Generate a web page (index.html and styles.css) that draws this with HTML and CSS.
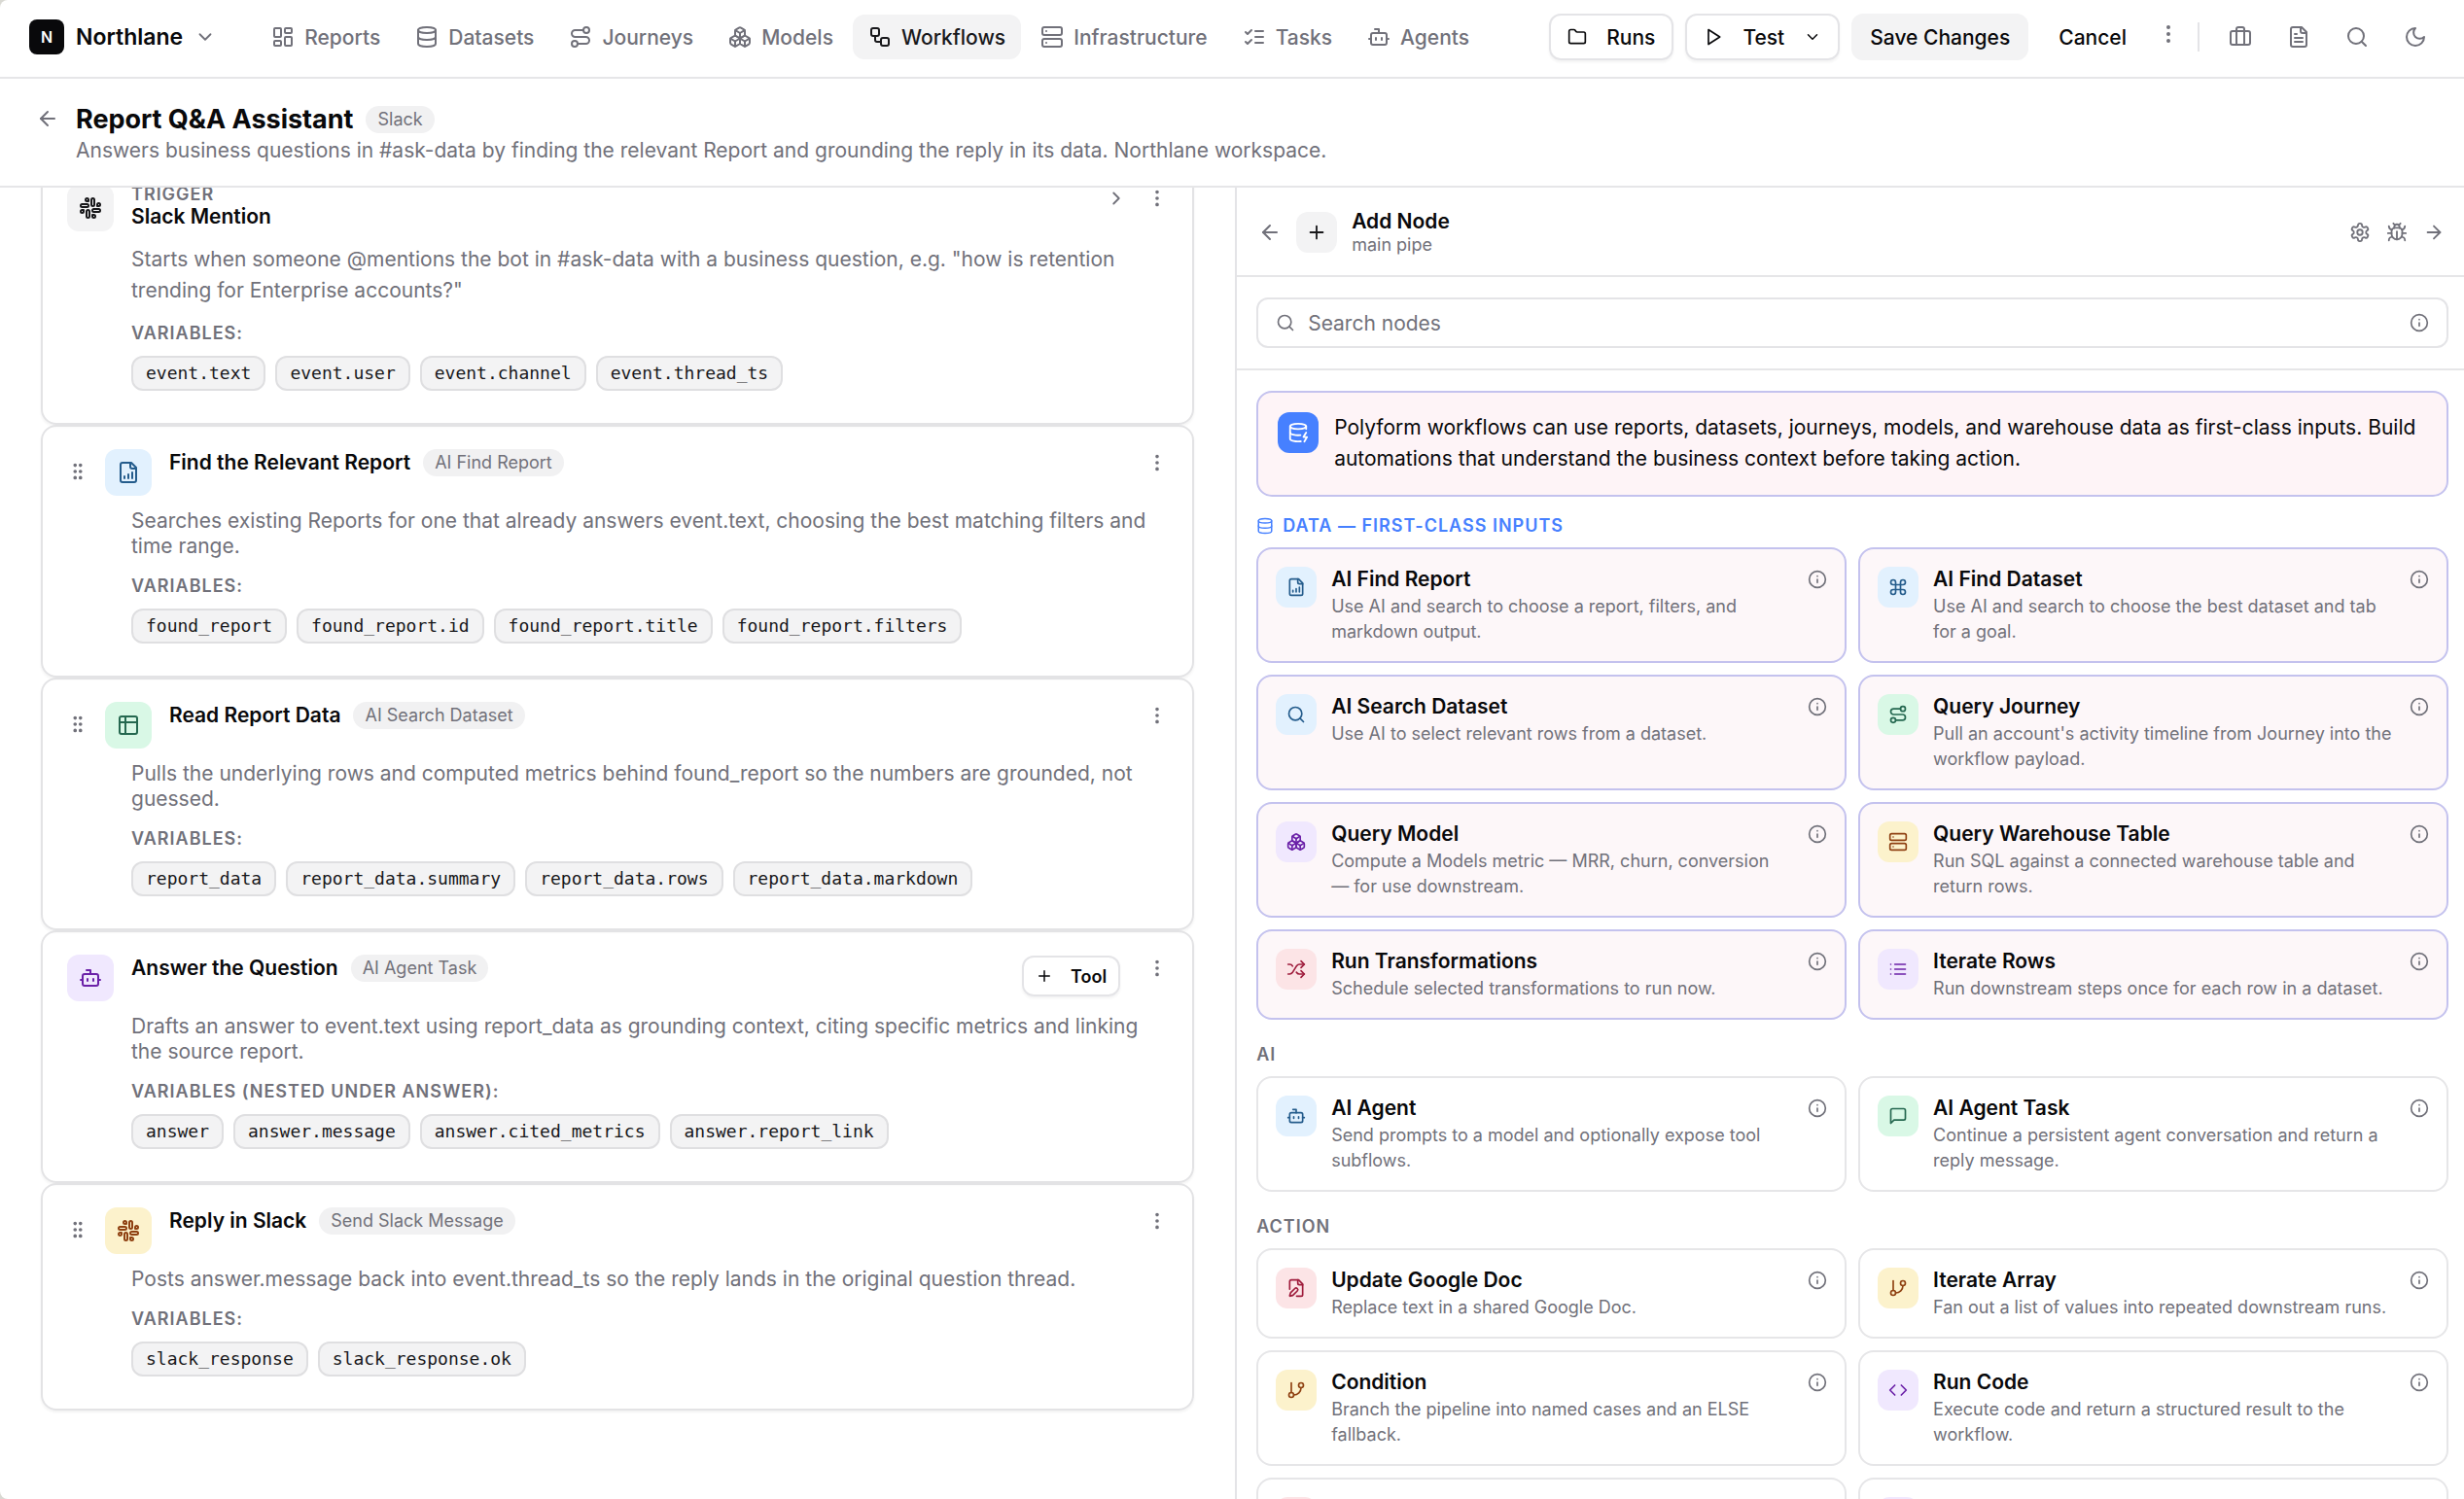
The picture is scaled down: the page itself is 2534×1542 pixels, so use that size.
FILE: index.html
```html
<!DOCTYPE html>
<html lang="en">
<head>
    <meta charset="UTF-8">
    <meta name="viewport" content="width=device-width, initial-scale=1.0">
    <title>Report Q&amp;A Assistant</title>
    <link rel="stylesheet" href="styles.css">
</head>
<body>
<svg class="sprite" aria-hidden="true">
    <symbol id="dashboard" viewBox="0 0 24 24"><rect width="7" height="9" x="3" y="3" rx="1"/><rect width="7" height="5" x="14" y="3" rx="1"/><rect width="7" height="9" x="14" y="12" rx="1"/><rect width="7" height="5" x="3" y="16" rx="1"/></symbol>
    <symbol id="database" viewBox="0 0 24 24"><ellipse cx="12" cy="5" rx="9" ry="3"/><path d="M3 5V19A9 3 0 0 0 21 19V5"/><path d="M3 12A9 3 0 0 0 21 12"/></symbol>
    <symbol id="database-zap" viewBox="0 0 24 24"><ellipse cx="12" cy="5" rx="9" ry="3"/><path d="M3 5V19A9 3 0 0 0 15 21.84"/><path d="M21 5V8"/><path d="M21 12L18 17H22L19 22"/><path d="M3 12A9 3 0 0 0 14.59 14.87"/></symbol>
    <symbol id="route" viewBox="0 0 24 24"><circle cx="6" cy="19" r="3"/><path d="M9 19h8.5a3.5 3.5 0 0 0 0-7h-11a3.5 3.5 0 0 1 0-7H15"/><circle cx="18" cy="5" r="3"/></symbol>
    <symbol id="boxes" viewBox="0 0 24 24"><path d="M2.97 12.92A2 2 0 0 0 2 14.63v3.24a2 2 0 0 0 .97 1.71l3 1.8a2 2 0 0 0 2.06 0L12 19v-5.5l-5-3-4.03 2.42Z"/><path d="m7 16.5-4.74-2.85"/><path d="m7 16.5 5-3"/><path d="M7 16.5v5.17"/><path d="M12 13.5V19l3.97 2.38a2 2 0 0 0 2.06 0l3-1.8a2 2 0 0 0 .97-1.71v-3.24a2 2 0 0 0-.97-1.71L17 10.5l-5 3Z"/><path d="m17 16.5-5-3"/><path d="m17 16.5 4.74-2.85"/><path d="M17 16.5v5.17"/><path d="M7.97 4.42A2 2 0 0 0 7 6.13v4.37l5 3 5-3V6.13a2 2 0 0 0-.97-1.71l-3-1.8a2 2 0 0 0-2.06 0l-3 1.8Z"/><path d="M12 8 7.26 5.15"/><path d="m12 8 4.74-2.85"/><path d="M12 13.5V8"/></symbol>
    <symbol id="workflow" viewBox="0 0 24 24"><rect width="8" height="8" x="3" y="3" rx="2"/><path d="M7 11v4a2 2 0 0 0 2 2h4"/><rect width="8" height="8" x="13" y="13" rx="2"/></symbol>
    <symbol id="server" viewBox="0 0 24 24"><rect width="20" height="8" x="2" y="2" rx="2"/><rect width="20" height="8" x="2" y="14" rx="2"/><path d="M6 6h.01M6 18h.01"/></symbol>
    <symbol id="checks" viewBox="0 0 24 24"><path d="m3 17 2 2 4-4"/><path d="m3 7 2 2 4-4"/><path d="M13 6h8M13 12h8M13 18h8"/></symbol>
    <symbol id="bot" viewBox="0 0 24 24"><path d="M12 8V4H8"/><rect width="16" height="12" x="4" y="8" rx="2"/><path d="M2 14h2M20 14h2M15 13v2M9 13v2"/></symbol>
    <symbol id="folder" viewBox="0 0 24 24"><path d="M20 20a2 2 0 0 0 2-2V8a2 2 0 0 0-2-2h-7.9a2 2 0 0 1-1.69-.9L9.6 3.9A2 2 0 0 0 7.93 3H4a2 2 0 0 0-2 2v13a2 2 0 0 0 2 2Z"/></symbol>
    <symbol id="play" viewBox="0 0 24 24"><path d="M6 3l14 9-14 9z"/></symbol>
    <symbol id="chevron-down" viewBox="0 0 24 24"><path d="m6 9 6 6 6-6"/></symbol>
    <symbol id="chevron-right" viewBox="0 0 24 24"><path d="m9 18 6-6-6-6"/></symbol>
    <symbol id="arrow-left" viewBox="0 0 24 24"><path d="m12 19-7-7 7-7"/><path d="M19 12H5"/></symbol>
    <symbol id="arrow-right" viewBox="0 0 24 24"><path d="M5 12h14"/><path d="m12 5 7 7-7 7"/></symbol>
    <symbol id="dots" viewBox="0 0 24 24"><circle cx="12" cy="12" r="1"/><circle cx="12" cy="5" r="1"/><circle cx="12" cy="19" r="1"/></symbol>
    <symbol id="grip" viewBox="0 0 24 24"><circle cx="9" cy="12" r="1"/><circle cx="9" cy="5" r="1"/><circle cx="9" cy="19" r="1"/><circle cx="15" cy="12" r="1"/><circle cx="15" cy="5" r="1"/><circle cx="15" cy="19" r="1"/></symbol>
    <symbol id="briefcase" viewBox="0 0 24 24"><path d="M16 20V4a2 2 0 0 0-2-2h-4a2 2 0 0 0-2 2v16"/><rect width="20" height="14" x="2" y="6" rx="2"/></symbol>
    <symbol id="file-text" viewBox="0 0 24 24"><path d="M15 2H6a2 2 0 0 0-2 2v16a2 2 0 0 0 2 2h12a2 2 0 0 0 2-2V7Z"/><path d="M14 2v4a2 2 0 0 0 2 2h4"/><path d="M10 9H8M16 13H8M16 17H8"/></symbol>
    <symbol id="file-chart" viewBox="0 0 24 24"><path d="M15 2H6a2 2 0 0 0-2 2v16a2 2 0 0 0 2 2h12a2 2 0 0 0 2-2V7Z"/><path d="M14 2v4a2 2 0 0 0 2 2h4"/><path d="M8 18v-2M12 18v-4M16 18v-6"/></symbol>
    <symbol id="file-pen" viewBox="0 0 24 24"><path d="M12.5 22H18a2 2 0 0 0 2-2V7l-5-5H6a2 2 0 0 0-2 2v9.5"/><path d="M14 2v4a2 2 0 0 0 2 2h4"/><path d="M13.378 15.626a1 1 0 1 0-3.004-3.004l-5.01 5.012a2 2 0 0 0-.506.854l-.837 2.87a.5.5 0 0 0 .62.62l2.87-.837a2 2 0 0 0 .854-.506z"/></symbol>
    <symbol id="search" viewBox="0 0 24 24"><circle cx="11" cy="11" r="8"/><path d="m21 21-4.3-4.3"/></symbol>
    <symbol id="moon" viewBox="0 0 24 24"><path d="M12 3a6 6 0 0 0 9 9 9 9 0 1 1-9-9Z"/></symbol>
    <symbol id="slack" viewBox="0 0 24 24"><rect width="3" height="8" x="13" y="2" rx="1.5"/><path d="M19 8.5V10h1.5A1.5 1.5 0 1 0 19 8.5"/><rect width="3" height="8" x="8" y="14" rx="1.5"/><path d="M5 15.5V14H3.5A1.5 1.5 0 1 0 5 15.5"/><rect width="8" height="3" x="14" y="13" rx="1.5"/><path d="M15.5 19H14v1.5a1.5 1.5 0 1 0 1.5-1.5"/><rect width="8" height="3" x="2" y="8" rx="1.5"/><path d="M8.5 5H10V3.5A1.5 1.5 0 1 0 8.5 5"/></symbol>
    <symbol id="table" viewBox="0 0 24 24"><rect width="18" height="18" x="3" y="3" rx="2"/><path d="M3 9h18M9 3v18"/></symbol>
    <symbol id="plus" viewBox="0 0 24 24"><path d="M5 12h14M12 5v14"/></symbol>
    <symbol id="info" viewBox="0 0 24 24"><circle cx="12" cy="12" r="10"/><path d="M12 16v-4M12 8h.01"/></symbol>
    <symbol id="settings" viewBox="0 0 24 24"><path d="M12.22 2h-.44a2 2 0 0 0-2 2v.18a2 2 0 0 1-1 1.73l-.43.25a2 2 0 0 1-2 0l-.15-.08a2 2 0 0 0-2.73.73l-.22.38a2 2 0 0 0 .73 2.73l.15.1a2 2 0 0 1 1 1.72v.51a2 2 0 0 1-1 1.74l-.15.09a2 2 0 0 0-.73 2.73l.22.38a2 2 0 0 0 2.73.73l.15-.08a2 2 0 0 1 2 0l.43.25a2 2 0 0 1 1 1.73V20a2 2 0 0 0 2 2h.44a2 2 0 0 0 2-2v-.18a2 2 0 0 1 1-1.73l.43-.25a2 2 0 0 1 2 0l.15.08a2 2 0 0 0 2.73-.73l.22-.39a2 2 0 0 0-.73-2.73l-.15-.08a2 2 0 0 1-1-1.74v-.5a2 2 0 0 1 1-1.74l.15-.09a2 2 0 0 0 .73-2.73l-.22-.38a2 2 0 0 0-2.73-.73l-.15.08a2 2 0 0 1-2 0l-.43-.25a2 2 0 0 1-1-1.73V4a2 2 0 0 0-2-2z"/><circle cx="12" cy="12" r="3"/></symbol>
    <symbol id="bug" viewBox="0 0 24 24"><path d="m8 2 1.88 1.88M14.12 3.88 16 2"/><path d="M9 7.13v-1a3.003 3.003 0 1 1 6 0v1"/><path d="M12 20c-3.3 0-6-2.7-6-6v-3a4 4 0 0 1 4-4h4a4 4 0 0 1 4 4v3c0 3.3-2.7 6-6 6"/><path d="M12 20v-9"/><path d="M6.53 9C4.6 8.8 3 7.1 3 5"/><path d="M6 13H2"/><path d="M3 21c0-2.1 1.7-3.9 3.8-4"/><path d="M20.97 5c0 2.1-1.6 3.8-3.5 4"/><path d="M22 13h-4"/><path d="M17.2 17c2.1.1 3.8 1.9 3.8 4"/></symbol>
    <symbol id="command" viewBox="0 0 24 24"><path d="M15 6v12a3 3 0 1 0 3-3H6a3 3 0 1 0 3 3V6a3 3 0 1 0-3 3h12a3 3 0 1 0-3-3"/></symbol>
    <symbol id="shuffle" viewBox="0 0 24 24"><path d="m18 14 4 4-4 4"/><path d="m18 2 4 4-4 4"/><path d="M2 18h1.973a4 4 0 0 0 3.3-1.7l5.454-8.6a4 4 0 0 1 3.3-1.7H22"/><path d="M2 6h1.972a4 4 0 0 1 3.6 2.2"/><path d="M22 18h-6.041a4 4 0 0 1-3.3-1.8l-.359-.45"/></symbol>
    <symbol id="list" viewBox="0 0 24 24"><path d="M3 6h.01M3 12h.01M3 18h.01M8 6h13M8 12h13M8 18h13"/></symbol>
    <symbol id="message" viewBox="0 0 24 24"><path d="M21 15a2 2 0 0 1-2 2H7l-4 4V5a2 2 0 0 1 2-2h14a2 2 0 0 1 2 2z"/></symbol>
    <symbol id="branch" viewBox="0 0 24 24"><path d="M6 3v12"/><circle cx="18" cy="6" r="3"/><circle cx="6" cy="18" r="3"/><path d="M18 9a9 9 0 0 1-9 9"/></symbol>
    <symbol id="code" viewBox="0 0 24 24"><path d="m16 18 6-6-6-6"/><path d="m8 6-6 6 6 6"/></symbol>
</svg>

<div class="app">
    <header class="topbar">
        <button class="workspace">
            <span class="logo">N</span>
            <span>Northlane</span>
            <svg class="icon s22"><use href="#chevron-down"/></svg>
        </button>
        <nav class="nav">
            <a href="#"><svg class="icon"><use href="#dashboard"/></svg>Reports</a>
            <a href="#"><svg class="icon"><use href="#database"/></svg>Datasets</a>
            <a href="#"><svg class="icon"><use href="#route"/></svg>Journeys</a>
            <a href="#"><svg class="icon"><use href="#boxes"/></svg>Models</a>
            <a href="#" class="active"><svg class="icon"><use href="#workflow"/></svg>Workflows</a>
            <a href="#"><svg class="icon"><use href="#server"/></svg>Infrastructure</a>
            <a href="#"><svg class="icon"><use href="#checks"/></svg>Tasks</a>
            <a href="#"><svg class="icon"><use href="#bot"/></svg>Agents</a>
        </nav>
        <div class="actions">
            <button class="btn outline"><svg class="icon s20"><use href="#folder"/></svg>Runs</button>
            <button class="btn outline"><svg class="icon s20"><use href="#play"/></svg>Test<svg class="icon s18"><use href="#chevron-down"/></svg></button>
            <button class="btn filled">Save Changes</button>
            <button class="btn">Cancel</button>
            <button class="icon-btn more" aria-label="More"><svg class="icon"><use href="#dots"/></svg></button>
        </div>
        <div class="tools">
            <button class="icon-btn" aria-label="Workspace"><svg class="icon"><use href="#briefcase"/></svg></button>
            <button class="icon-btn" aria-label="Docs"><svg class="icon"><use href="#file-text"/></svg></button>
            <button class="icon-btn" aria-label="Search"><svg class="icon"><use href="#search"/></svg></button>
            <button class="icon-btn" aria-label="Theme"><svg class="icon"><use href="#moon"/></svg></button>
        </div>
    </header>

    <div class="page-head">
        <button class="icon-btn back" aria-label="Back"><svg class="icon"><use href="#arrow-left"/></svg></button>
        <div>
            <div class="page-title">
                <h1>Report Q&amp;A Assistant</h1>
                <span class="badge">Slack</span>
            </div>
            <p class="page-desc">Answers business questions in #ask-data by finding the relevant Report and grounding the reply in its data. Northlane workspace.</p>
        </div>
    </div>

    <main class="workspace-body">
        <section class="pipeline">
            <div class="steps">
                <article class="step">
                    <div class="step-head">
                        <span class="tile gray"><svg class="icon"><use href="#slack"/></svg></span>
                        <div class="step-name">
                            <div class="label">TRIGGER</div>
                            <h2>Slack Mention</h2>
                        </div>
                        <div class="step-actions">
                            <button class="icon-btn" aria-label="Open"><svg class="icon s22"><use href="#chevron-right"/></svg></button>
                            <button class="icon-btn" aria-label="More"><svg class="icon s22"><use href="#dots"/></svg></button>
                        </div>
                    </div>
                    <div class="step-body">
                        <p class="loose">Starts when someone @mentions the bot in #ask-data with a business question, e.g. "how is retention trending for Enterprise accounts?"</p>
                        <div class="label">VARIABLES:</div>
                        <div class="chips"><code>event.text</code><code>event.user</code><code>event.channel</code><code>event.thread_ts</code></div>
                    </div>
                </article>

                <article class="step">
                    <div class="step-head">
                        <button class="grip" aria-label="Move"><svg class="icon s22"><use href="#grip"/></svg></button>
                        <span class="tile blue"><svg class="icon"><use href="#file-chart"/></svg></span>
                        <div class="step-title"><h2>Find the Relevant Report</h2><span class="badge">AI Find Report</span></div>
                        <div class="step-actions">
                            <button class="icon-btn" aria-label="More"><svg class="icon s22"><use href="#dots"/></svg></button>
                        </div>
                    </div>
                    <div class="step-body">
                        <p>Searches existing Reports for one that already answers event.text, choosing the best matching filters and time range.</p>
                        <div class="label">VARIABLES:</div>
                        <div class="chips"><code>found_report</code><code>found_report.id</code><code>found_report.title</code><code>found_report.filters</code></div>
                    </div>
                </article>

                <article class="step">
                    <div class="step-head">
                        <button class="grip" aria-label="Move"><svg class="icon s22"><use href="#grip"/></svg></button>
                        <span class="tile green"><svg class="icon"><use href="#table"/></svg></span>
                        <div class="step-title"><h2>Read Report Data</h2><span class="badge">AI Search Dataset</span></div>
                        <div class="step-actions">
                            <button class="icon-btn" aria-label="More"><svg class="icon s22"><use href="#dots"/></svg></button>
                        </div>
                    </div>
                    <div class="step-body">
                        <p>Pulls the underlying rows and computed metrics behind found_report so the numbers are grounded, not guessed.</p>
                        <div class="label">VARIABLES:</div>
                        <div class="chips"><code>report_data</code><code>report_data.summary</code><code>report_data.rows</code><code>report_data.markdown</code></div>
                    </div>
                </article>

                <article class="step">
                    <div class="step-head">
                        <span class="tile purple"><svg class="icon"><use href="#bot"/></svg></span>
                        <div class="step-title"><h2>Answer the Question</h2><span class="badge">AI Agent Task</span></div>
                        <div class="step-actions">
                            <button class="tool-btn"><svg class="icon s18"><use href="#plus"/></svg>Tool</button>
                            <button class="icon-btn" aria-label="More"><svg class="icon s22"><use href="#dots"/></svg></button>
                        </div>
                    </div>
                    <div class="step-body">
                        <p>Drafts an answer to event.text using report_data as grounding context, citing specific metrics and linking the source report.</p>
                        <div class="label">VARIABLES (NESTED UNDER ANSWER):</div>
                        <div class="chips"><code>answer</code><code>answer.message</code><code>answer.cited_metrics</code><code>answer.report_link</code></div>
                    </div>
                </article>

                <article class="step">
                    <div class="step-head">
                        <button class="grip" aria-label="Move"><svg class="icon s22"><use href="#grip"/></svg></button>
                        <span class="tile yellow"><svg class="icon"><use href="#slack"/></svg></span>
                        <div class="step-title"><h2>Reply in Slack</h2><span class="badge">Send Slack Message</span></div>
                        <div class="step-actions">
                            <button class="icon-btn" aria-label="More"><svg class="icon s22"><use href="#dots"/></svg></button>
                        </div>
                    </div>
                    <div class="step-body">
                        <p>Posts answer.message back into event.thread_ts so the reply lands in the original question thread.</p>
                        <div class="label">VARIABLES:</div>
                        <div class="chips"><code>slack_response</code><code>slack_response.ok</code></div>
                    </div>
                </article>
            </div>
        </section>

        <aside class="panel">
            <div class="panel-head">
                <button class="icon-btn" aria-label="Back"><svg class="icon"><use href="#arrow-left"/></svg></button>
                <span class="tile small gray"><svg class="icon s22"><use href="#plus"/></svg></span>
                <div class="panel-title">
                    <h2>Add Node</h2>
                    <p>main pipe</p>
                </div>
                <div class="panel-tools">
                    <button class="icon-btn" aria-label="Settings"><svg class="icon s22"><use href="#settings"/></svg></button>
                    <button class="icon-btn" aria-label="Debug"><svg class="icon s22"><use href="#bug"/></svg></button>
                    <button class="icon-btn" aria-label="Next"><svg class="icon s22"><use href="#arrow-right"/></svg></button>
                </div>
            </div>

            <div class="search-row">
                <div class="search-box">
                    <svg class="icon s20"><use href="#search"/></svg>
                    <input type="text" placeholder="Search nodes" aria-label="Search nodes">
                    <button class="icon-btn" aria-label="Info"><svg class="icon s20"><use href="#info"/></svg></button>
                </div>
            </div>

            <div class="catalog">
                <div class="callout">
                    <span class="tile small solid"><svg class="icon s22"><use href="#database-zap"/></svg></span>
                    <p>Polyform workflows can use reports, datasets, journeys, models, and warehouse data as first-class inputs. Build automations that understand the business context before taking action.</p>
                </div>

                <h3 class="label data"><svg class="icon s18"><use href="#database"/></svg>DATA — FIRST-CLASS INPUTS</h3>
                <div class="grid first-class">
                    <article class="node">
                        <span class="tile small blue"><svg class="icon s20"><use href="#file-chart"/></svg></span>
                        <div class="node-text"><h4>AI Find Report</h4><p>Use AI and search to choose a report, filters, and markdown output.</p></div>
                        <button class="icon-btn" aria-label="Info"><svg class="icon s20"><use href="#info"/></svg></button>
                    </article>
                    <article class="node">
                        <span class="tile small blue"><svg class="icon s20"><use href="#command"/></svg></span>
                        <div class="node-text"><h4>AI Find Dataset</h4><p>Use AI and search to choose the best dataset and tab for a goal.</p></div>
                        <button class="icon-btn" aria-label="Info"><svg class="icon s20"><use href="#info"/></svg></button>
                    </article>
                    <article class="node">
                        <span class="tile small blue"><svg class="icon s20"><use href="#search"/></svg></span>
                        <div class="node-text"><h4>AI Search Dataset</h4><p>Use AI to select relevant rows from a dataset.</p></div>
                        <button class="icon-btn" aria-label="Info"><svg class="icon s20"><use href="#info"/></svg></button>
                    </article>
                    <article class="node">
                        <span class="tile small green"><svg class="icon s20"><use href="#route"/></svg></span>
                        <div class="node-text"><h4>Query Journey</h4><p>Pull an account's activity timeline from Journey into the workflow payload.</p></div>
                        <button class="icon-btn" aria-label="Info"><svg class="icon s20"><use href="#info"/></svg></button>
                    </article>
                    <article class="node">
                        <span class="tile small purple"><svg class="icon s20"><use href="#boxes"/></svg></span>
                        <div class="node-text"><h4>Query Model</h4><p>Compute a Models metric — MRR, churn, conversion —&nbsp;for use downstream.</p></div>
                        <button class="icon-btn" aria-label="Info"><svg class="icon s20"><use href="#info"/></svg></button>
                    </article>
                    <article class="node">
                        <span class="tile small yellow"><svg class="icon s20"><use href="#server"/></svg></span>
                        <div class="node-text"><h4>Query Warehouse Table</h4><p>Run SQL against a connected warehouse table and return rows.</p></div>
                        <button class="icon-btn" aria-label="Info"><svg class="icon s20"><use href="#info"/></svg></button>
                    </article>
                    <article class="node">
                        <span class="tile small pink"><svg class="icon s20"><use href="#shuffle"/></svg></span>
                        <div class="node-text"><h4>Run Transformations</h4><p>Schedule selected transformations to run now.</p></div>
                        <button class="icon-btn" aria-label="Info"><svg class="icon s20"><use href="#info"/></svg></button>
                    </article>
                    <article class="node">
                        <span class="tile small purple"><svg class="icon s20"><use href="#list"/></svg></span>
                        <div class="node-text"><h4>Iterate Rows</h4><p>Run downstream steps once for each row in a dataset.</p></div>
                        <button class="icon-btn" aria-label="Info"><svg class="icon s20"><use href="#info"/></svg></button>
                    </article>
                </div>

                <h3 class="label">AI</h3>
                <div class="grid">
                    <article class="node">
                        <span class="tile small blue"><svg class="icon s20"><use href="#bot"/></svg></span>
                        <div class="node-text"><h4>AI Agent</h4><p>Send prompts to a model and optionally expose tool subflows.</p></div>
                        <button class="icon-btn" aria-label="Info"><svg class="icon s20"><use href="#info"/></svg></button>
                    </article>
                    <article class="node">
                        <span class="tile small green"><svg class="icon s20"><use href="#message"/></svg></span>
                        <div class="node-text"><h4>AI Agent Task</h4><p>Continue a persistent agent conversation and return a reply message.</p></div>
                        <button class="icon-btn" aria-label="Info"><svg class="icon s20"><use href="#info"/></svg></button>
                    </article>
                </div>

                <h3 class="label">ACTION</h3>
                <div class="grid">
                    <article class="node">
                        <span class="tile small pink"><svg class="icon s20"><use href="#file-pen"/></svg></span>
                        <div class="node-text"><h4>Update Google Doc</h4><p>Replace text in a shared Google Doc.</p></div>
                        <button class="icon-btn" aria-label="Info"><svg class="icon s20"><use href="#info"/></svg></button>
                    </article>
                    <article class="node">
                        <span class="tile small yellow"><svg class="icon s20"><use href="#branch"/></svg></span>
                        <div class="node-text"><h4>Iterate Array</h4><p>Fan out a list of values into repeated downstream runs.</p></div>
                        <button class="icon-btn" aria-label="Info"><svg class="icon s20"><use href="#info"/></svg></button>
                    </article>
                    <article class="node">
                        <span class="tile small yellow"><svg class="icon s20"><use href="#branch"/></svg></span>
                        <div class="node-text"><h4>Condition</h4><p>Branch the pipeline into named cases and an ELSE fallback.</p></div>
                        <button class="icon-btn" aria-label="Info"><svg class="icon s20"><use href="#info"/></svg></button>
                    </article>
                    <article class="node">
                        <span class="tile small purple"><svg class="icon s20"><use href="#code"/></svg></span>
                        <div class="node-text"><h4>Run Code</h4><p>Execute code and return a structured result to the workflow.</p></div>
                        <button class="icon-btn" aria-label="Info"><svg class="icon s20"><use href="#info"/></svg></button>
                    </article>
                    <article class="node"><span class="tile small pink"></span></article>
                    <article class="node"><span class="tile small purple"></span></article>
                </div>
            </div>
        </aside>
    </main>
</div>
</body>
</html>
```

FILE: styles.css
```css
* {
    box-sizing: border-box;
}
body {
    margin: 0;
    background-color: #d9d9d3;
    font-family: Inter, "Liberation Sans", sans-serif;
    font-size: 21px;
    color: #09090b;
}
h1, h2, h3, h4, p {
    margin: 0;
}
button {
    margin: 0;
    padding: 0;
    border: none;
    background: none;
    font: inherit;
    color: inherit;
    cursor: pointer;
}
.sprite {
    display: none;
}
.icon {
    flex: none;
    display: block;
    width: 24px;
    height: 24px;
    fill: none;
    stroke: currentColor;
    stroke-width: 2;
    stroke-linecap: round;
    stroke-linejoin: round;
}
.s22 { width: 22px; height: 22px; }
.s20 { width: 20px; height: 20px; }
.s18 { width: 18px; height: 18px; }
.icon-btn {
    flex: none;
    color: #71717a;
}
.app {
    display: flex;
    flex-direction: column;
    height: 100vh;
    overflow: hidden;
    border-radius: 8px 0 0 8px;
    background-color: #fff;
}

/* top bar */
.topbar {
    flex: none;
    display: flex;
    align-items: center;
    padding: 14px 38px 17px 30px;
    border-bottom: 2px solid #e6e6e8;
}
.workspace {
    display: flex;
    align-items: center;
    gap: 12px;
    font-size: 23px;
    font-weight: 600;
}
.workspace .icon {
    color: #71717a;
}
.logo {
    width: 36px;
    height: 36px;
    border-radius: 8px;
    background-color: #09090b;
    color: #fff;
    font-size: 16px;
    line-height: 36px;
    text-align: center;
}
.nav {
    display: flex;
    gap: 4px;
    margin-left: 41px;
}
.nav a {
    display: flex;
    align-items: center;
    gap: 10px;
    height: 46px;
    padding: 0 16px;
    border-radius: 12px;
    color: #71717a;
    font-weight: 500;
    text-decoration: none;
}
.nav .active {
    background-color: #f3f3f4;
    color: #18181b;
}
.actions {
    display: flex;
    align-items: center;
    gap: 12px;
    margin-left: auto;
}
.btn {
    display: flex;
    align-items: center;
    gap: 20px;
    height: 48px;
    padding: 0 19px;
    border-radius: 12px;
    font-weight: 500;
}
.outline {
    padding: 0 17px;
    border: 2px solid #e4e4e7;
    box-shadow: 0 2px 3px rgba(0, 0, 0, 0.05);
}
.filled {
    background-color: #f3f3f4;
}
.more {
    padding-bottom: 6px;
}
.tools {
    display: flex;
    gap: 36px;
    margin-left: 18px;
    padding: 3px 0 3px 30px;
    border-left: 2px solid #e4e4e7;
}

/* workflow name */
.page-head {
    flex: none;
    display: flex;
    align-items: flex-start;
    gap: 17px;
    padding: 27px 37px 22px;
    border-bottom: 2px solid #e6e6e8;
}
.back {
    padding-top: 2px;
}
.page-title {
    display: flex;
    align-items: center;
    gap: 13px;
}
h1 {
    font-size: 27px;
    line-height: 30px;
    font-weight: 700;
}
.page-desc {
    margin-top: 3px;
    line-height: 28px;
    color: #71717a;
}
.badge {
    padding: 0 12px;
    border-radius: 14px;
    background-color: #f1f1f2;
    color: #71717a;
    font-size: 18px;
    line-height: 28px;
}
.workspace-body {
    flex: 1;
    min-height: 0;
    display: grid;
    grid-template-columns: 201fr 200fr;
}

/* pipeline */
.pipeline {
    overflow: hidden;
    padding: 0 42px;
}
.steps {
    margin-top: -28px;
}
.step {
    padding: 23px 25px 33px;
    border: 2px solid #e3e3e5;
    border-radius: 16px;
    box-shadow: 0 2px 3px rgba(0, 0, 0, 0.05);
}
.step-head {
    display: flex;
    align-items: flex-start;
    height: 48px;
    margin-bottom: 13px;
}
.grip {
    margin: 12px 17px 0 0;
    color: #71717a;
}
.tile {
    flex: none;
    display: flex;
    align-items: center;
    justify-content: center;
    width: 48px;
    height: 48px;
    border-radius: 12px;
}
.small {
    width: 42px;
    height: 42px;
}
.gray { background-color: #f3f3f4; color: #18181b; }
.blue { background-color: #e2f1fe; color: #245c8c; }
.green { background-color: #d9f8e6; color: #256850; }
.purple { background-color: #f0e8fe; color: #6b21a8; }
.yellow { background-color: #fcf2cc; color: #8f4112; }
.pink { background-color: #fce4e6; color: #9f1c3c; }
.solid { background-color: #4680ff; color: #fff; }
h2, h4 {
    font-size: 21px;
    line-height: 26px;
    font-weight: 600;
}
.step-name, .step-title {
    margin-left: 18px;
}
.step-title {
    display: flex;
    align-items: center;
    gap: 13px;
}
.step-actions {
    display: flex;
    align-items: flex-start;
    gap: 20px;
    margin-left: auto;
}
.step-actions .icon-btn {
    padding-top: 3px;
}
.tool-btn {
    display: flex;
    align-items: center;
    gap: 18px;
    height: 42px;
    margin: 1px 7px 0 0;
    padding: 0 12px;
    border: 2px solid #e4e4e7;
    border-radius: 12px;
    box-shadow: 0 2px 3px rgba(0, 0, 0, 0.05);
    font-size: 18px;
    font-weight: 600;
}
.step-body {
    padding-left: 66px;
}
.step-body p {
    line-height: 26px;
    color: #71717a;
}
.step-body .loose {
    line-height: 32px;
}
.label {
    font-size: 18px;
    line-height: 20px;
    font-weight: 600;
    letter-spacing: 1px;
    color: #71717a;
}
.step-body .label {
    margin: 18px 0 13px;
}
.chips {
    display: flex;
    flex-wrap: wrap;
    gap: 10px;
}
.chips code {
    padding: 0 13px;
    border: 2px solid #dfdfe1;
    border-radius: 12px;
    background-color: #f3f3f4;
    color: #18181b;
    font-family: "DejaVu Sans Mono", monospace;
    font-size: 18px;
    line-height: 32px;
}

/* add node panel */
.panel {
    display: flex;
    flex-direction: column;
    overflow: hidden;
    border-left: 2px solid #e4e4e7;
}
.panel-head {
    display: flex;
    align-items: center;
    padding: 22px 20px 20px 22px;
    border-bottom: 2px solid #e6e6e8;
}
.panel-head .tile {
    margin: 0 15px;
}
.panel-title p {
    font-size: 18px;
    line-height: 22px;
    color: #71717a;
}
.panel-tools {
    display: flex;
    gap: 16px;
    margin-left: auto;
}
.search-row {
    padding: 21px 16px 21px 20px;
    border-bottom: 2px solid #e6e6e8;
}
.search-box {
    display: flex;
    align-items: center;
    gap: 13px;
    height: 52px;
    padding: 0 18px;
    border: 2px solid #e4e4e7;
    border-radius: 12px;
    color: #71717a;
}
.search-box input {
    flex: 1;
    min-width: 0;
    padding: 0;
    border: none;
    outline: none;
    background: none;
    font: inherit;
}
.search-box input::placeholder {
    color: #71717a;
}
.catalog {
    padding: 21px 16px 0 20px;
}
.callout {
    display: flex;
    gap: 16px;
    padding: 20px 20px 21px;
    border: 2px solid #c4c2ee;
    border-radius: 16px;
    background-color: #fef4f7;
    line-height: 32px;
}
.catalog .label {
    margin: 26px 0 12px;
}
.catalog .data {
    display: flex;
    align-items: center;
    gap: 9px;
    margin-top: 20px;
    color: #4680ff;
}
.grid {
    display: grid;
    grid-template-columns: 1fr 1fr;
    gap: 12px;
}
.node {
    display: flex;
    align-items: flex-start;
    padding: 18px 18px 17px;
    border: 2px solid #e6e6e8;
    border-radius: 16px;
}
.first-class .node {
    border-color: #c4c2ee;
    background-color: #fdf7f9;
}
.node-text {
    flex: 1;
    margin: 0 12px 0 15px;
}
.node-text p {
    margin-top: 2px;
    font-size: 18px;
    line-height: 26px;
    color: #71717a;
}
.node .icon-btn {
    padding-top: 3px;
}
```
